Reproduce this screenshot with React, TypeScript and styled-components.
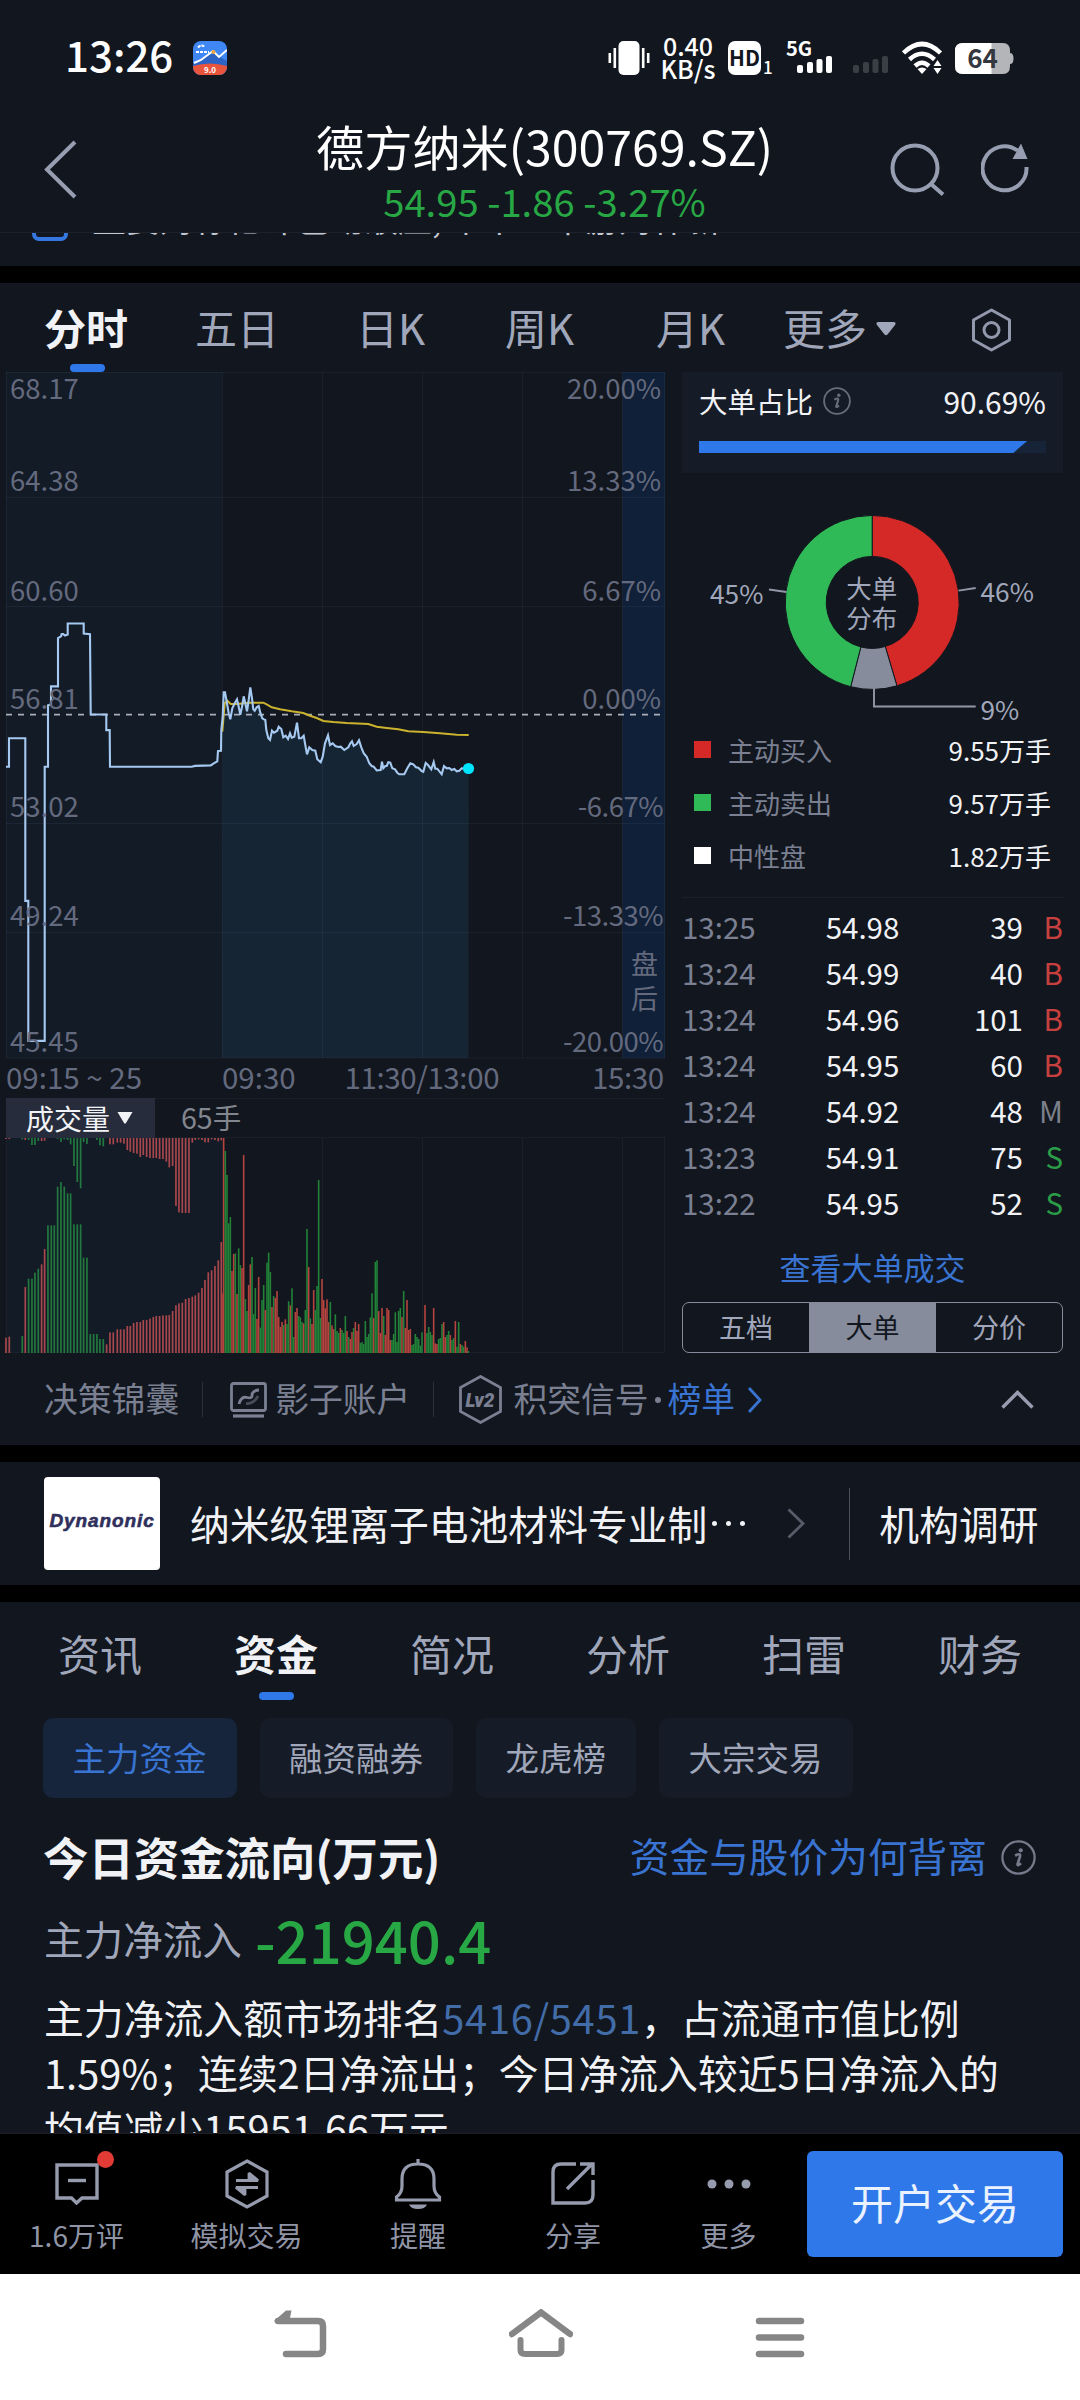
import React from "react";
import styled, { createGlobalStyle, css } from "styled-components";

const C = {
  bg: "#12161e",
  card: "#161c27",
  white: "#f1f2f5",
  soft: "#a1a7ba",
  dim: "#7a8092",
  axis: "#646a7e",
  blue: "#2f78ea",
  link: "#3974d2",
  red: "#d42926",
  green: "#30b957",
  down: "#28a745",
};

const FONT = '"Noto Sans CJK SC", "Noto Sans", sans-serif';

const Global = createGlobalStyle`
  html, body { margin: 0; padding: 0; background: #000; }
  body { width: 1080px; font-family: ${FONT}; color: ${C.white}; }
  * { box-sizing: border-box; }
  svg { display: block; flex: none; }
`;

const Screen = styled.div`
  width: 1080px;
  height: 2400px;
  display: flex;
  flex-direction: column;
  overflow: hidden;
  background: ${C.bg};
`;

const Gap = styled.div<{ $h: number }>`
  height: ${(p) => p.$h}px;
  flex: none;
  background: #000;
`;

const Spacer = styled.div`
  flex: 1;
`;

/* ---------- status bar ---------- */

const StatusBar = styled.div`
  height: 116px;
  flex: none;
  display: flex;
  align-items: center;
  padding: 0 66px 0 65px;
  color: #fff;
`;

const Clock = styled.div`
  font-size: 42px;
  font-weight: 500;
  line-height: 42px;
  margin: -8px 20px 0 0;
`;

const StatusIcons = styled.div`
  display: flex;
  align-items: center;
`;

const Speed = styled.div`
  width: 58px;
  margin: 0 11px 0 9px;
  text-align: center;
  font-size: 25px;
  font-weight: 500;
  line-height: 23px;
  padding-bottom: 3px;
  white-space: nowrap;
`;

const Sig = styled.svg<{ $ml: number }>`
  margin-left: ${(p) => p.$ml}px;
`;

function SignalBars({ color }: { color: string }) {
  return (
    <g fill={color}>
      <rect x="0" y="9" width="6" height="8" rx="2" />
      <rect x="10" y="6" width="6" height="11" rx="2" />
      <rect x="19.5" y="3" width="6" height="14" rx="2" />
      <rect x="29" y="0" width="6" height="17" rx="2" />
    </g>
  );
}

function Status() {
  return (
    <StatusBar>
      <Clock>13:26</Clock>
      <svg width="34" height="34" viewBox="0 0 34 34">
        <defs>
          <clipPath id="appIcon">
            <rect width="34" height="34" rx="8" />
          </clipPath>
        </defs>
        <g clipPath="url(#appIcon)">
          <rect width="34" height="34" fill="#3f87f5" />
          <path d="M0 22L20 12L34 20V34H0Z" fill="#2c63c4" />
          <path d="M0 25Q17 20 34 25V34H0Z" fill="#e9553c" />
          <path d="M1 22L8 19L20 10L26 16L34 9" fill="none" stroke="#fff" strokeWidth="2" />
          <circle cx="20.500" cy="11" r="2" fill="#f2a33c" />
          <path d="M5 6.500Q8 3 12 6M3 11H16" stroke="#fff" strokeWidth="2" strokeDasharray="3 1" fill="none" />
          <text x="11" y="32" fontSize="8" fill="#fff" fontWeight="700" fontFamily={FONT}>9.0</text>
        </g>
      </svg>
      <Spacer />
      <StatusIcons>
        <svg width="42" height="34" viewBox="0 0 42 34">
          <rect x="10.500" y="0" width="21" height="34" rx="5" fill="#fff" />
          <path d="M6.800 7V27M35.200 7V27" stroke="#fff" strokeWidth="2.600" />
          <path d="M1.800 12V22M40.200 12V22" stroke="#fff" strokeWidth="2.600" />
        </svg>
        <Speed>
          0.40
          <br />
          KB/s
        </Speed>
        <svg width="46" height="34" viewBox="0 0 46 34">
          <rect width="33" height="34" rx="7" fill="#fff" />
          <text x="16.500" y="24.500" textAnchor="middle" fontSize="21" fontWeight="700" fill={C.bg} fontFamily={FONT}>HD</text>
          <text x="35" y="33" fontSize="17" fontWeight="500" fill="#fff" fontFamily={FONT}>1</text>
        </svg>
        <Sig $ml={12} width="46" height="34" viewBox="0 0 46 34">
          <text x="0" y="15" fontSize="20" fontWeight="700" fill="#fff" fontFamily={FONT} textLength="26">5G</text>
          <g transform="translate(11 15)"><SignalBars color="#fff" /></g>
        </Sig>
        <Sig $ml={21} width="36" height="34" viewBox="0 0 36 34">
          <g transform="translate(0 15)"><SignalBars color="#3b3e45" /></g>
        </Sig>
        <Sig $ml={13} width="41" height="34" viewBox="0 0 41 34">
          <g fill="none" stroke="#fff" strokeWidth="4.500">
            <path d="M1.500 12Q20 -6 38.500 12" />
            <path d="M7.500 18.500Q20 7 32.500 18.500" />
            <path d="M13 25Q20 18.500 27 25" />
          </g>
          <path d="M15.500 28Q20 25 24.500 28L20 33Z" fill="#fff" />
          <path d="M31.500 25L35.500 19L39.500 25ZM31.500 27L35.500 33L39.500 27Z" fill="#fff" />
        </Sig>
        <Sig $ml={12} width="59" height="31" viewBox="0 0 59 31">
          <path d="M8 0H48Q55 0 55 8V10Q58.500 10 58.500 15.500T55 21V23Q55 31 48 31H8Q0 31 0 23V8Q0 0 8 0Z" fill="#b4b5b8" />
          <path d="M8 0H36.500V31H8Q0 31 0 23V8Q0 0 8 0Z" fill="#fff" />
          <text x="27.500" y="24.500" textAnchor="middle" fontSize="26" fontWeight="700" fill="#34373e" fontFamily={FONT}>64</text>
        </Sig>
      </StatusIcons>
    </StatusBar>
  );
}

/* ---------- title bar ---------- */

const TitleBar = styled.div`
  height: 117px;
  flex: none;
  display: grid;
  grid-template-columns: 228px 1fr 219px;
  border-bottom: 1px solid #1c212b;
`;

const BackCell = styled.div`
  padding: 24px 0 0 43px;
`;

const TitleCell = styled.div`
  text-align: center;
  white-space: nowrap;
`;

const Title = styled.div`
  font-size: 48.200px;
  line-height: 58px;
  color: #fff;
`;

const Quote = styled.div`
  font-size: 38.200px;
  line-height: 53px;
  color: ${C.down};
`;

const TitleActions = styled.div`
  display: flex;
  gap: 34px;
  padding: 26px 0 0 28px;
`;

function Header() {
  return (
    <TitleBar>
      <BackCell>
        <svg width="36" height="60" viewBox="0 0 36 60" fill="none" stroke="#979eb2" strokeWidth="4">
          <path d="M32 2L4 29.500L32 57" />
        </svg>
      </BackCell>
      <TitleCell>
        <Title>德方纳米(300769.SZ)</Title>
        <Quote>54.95 -1.86 -3.27%</Quote>
      </TitleCell>
      <TitleActions>
        <svg width="58" height="56" viewBox="0 0 58 56" fill="none" stroke="#979eb2" strokeWidth="4">
          <circle cx="26" cy="26" r="22.500" />
          <path d="M42 42L54 52.500" />
        </svg>
        <svg width="56" height="56" viewBox="0 0 56 56" fill="none" stroke="#979eb2" strokeWidth="4">
          <path d="M45.500 25A22 22 0 1 1 36.500 8.500" />
          <path d="M40 1.500L46.500 17H31.500Z" fill="#979eb2" stroke="none" />
        </svg>
      </TitleActions>
    </TitleBar>
  );
}

const Clipped = styled.div`
  height: 33px;
  flex: none;
  overflow: hidden;
  display: flex;
  align-items: flex-start;
  padding-left: 32px;
`;

const ClippedBadge = styled.div`
  width: 36px;
  height: 37px;
  margin: -29px 24px 0 0;
  border: 4px solid #3577de;
  border-radius: 7px;
`;

const ClippedText = styled.div`
  margin-top: -32px;
  font-size: 34px;
  line-height: 34px;
  white-space: nowrap;
  color: #c3c7d0;
`;

/* ---------- chart tabs ---------- */

const ChartTabs = styled.div`
  height: 89px;
  flex: none;
  display: grid;
  grid-template-columns: 151px 161px 149px 151px 127px 188px 60px;
  padding-left: 44px;
`;

const ChartTab = styled.div<{ $on?: boolean }>`
  padding-top: 15px;
  font-size: 42px;
  line-height: 57px;
  white-space: nowrap;
  color: ${(p) => (p.$on ? C.white : C.soft)};
  font-weight: ${(p) => (p.$on ? 700 : 400)};
  ${(p) =>
    p.$on &&
    css`
      &::after {
        content: "";
        display: block;
        width: 35px;
        height: 8px;
        margin: 9px 0 0 26px;
        border-radius: 4px;
        background: ${C.blue};
      }
    `}
`;

const MoreTab = styled(ChartTab)`
  display: flex;
  gap: 9px;
  align-items: center;
  align-self: start;
  & > svg {
    margin-top: 5px;
  }
`;

const SettingsCell = styled.div`
  padding-top: 25px;
`;

/* ---------- market area ---------- */

const Market = styled.div`
  display: flex;
  flex: none;
  height: 982px;
`;

const ChartColumn = styled.div`
  width: 682px;
  flex: none;
`;

const VolumeHeader = styled.div`
  width: 659px;
  height: 40px;
  margin-left: 6px;
  display: flex;
  border-top: 1px solid #191e27;
  border-bottom: 1px solid #191e27;
`;

const VolumePicker = styled.div`
  width: 149px;
  margin: -1px 26px -1px 0;
  display: flex;
  align-items: center;
  gap: 7px;
  padding-left: 20px;
  font-size: 28px;
  line-height: 36px;
  background: #262c3b;
`;

const VolumeValue = styled.div`
  font-size: 28.500px;
  line-height: 36px;
  color: #82868e;
`;

const AUCTION = "18,886 27,886 27,824 76,824 76,1178 85,1178 85,1483 134,1483 134,886 144,886 144,752 153,750 153,711 174,711 174,606 183,602 185,597 190,597 195,600 203,598 203,574 251,574 251,596 270,597 272,772 319,772 319,806 329,806 330,886 575,886 585,884 632,883 637,881";
const PRICE = "32,316 45,308 52,304 54,273 63,272 64,210 68,170 71,97 75,97 80,125 86,160 91,178 97,145 104,130 111,118 116,140 121,164 126,140 131,109 136,130 141,154 146,120 151,82 156,115 160,148 164,152 170,142 176,138 181,158 187,175 192,178 196,180 199,210 205,235 210,240 216,212 222,218 232,212 236,200 244,207 250,232 257,227 264,237 270,220 275,233 283,230 291,188 297,235 304,235 311,227 316,255 321,283 328,262 337,270 346,272 352,298 362,307 368,290 375,250 384,226 390,255 398,250 406,258 415,261 422,260 433,270 445,262 451,250 456,244 461,258 470,252 477,241 484,262 491,280 500,290 508,310 515,318 521,320 530,331 542,330 546,305 550,325 556,318 560,318 565,307 571,308 577,325 585,328 592,338 598,343 613,343 622,325 631,310 640,313 648,322 655,323 665,333 670,335 677,309 684,315 694,328 701,306 706,326 712,326 725,343 732,318 740,325 748,324 755,330 763,327 770,334 778,332 785,325 806,326";
const AVERAGE = "67,215 74,130 82,122 92,132 110,132 150,128 190,128 200,133 215,142 240,148 275,154 310,159 330,167 350,174 370,183 400,186 440,189 505,192 530,200 560,204 595,208 625,214 670,216 720,220 770,224 806,225";

type Pt = [number, number];
const parse = (s: string, fx: (x: number) => number, fy: (y: number) => number): Pt[] =>
  s.split(" ").map((p) => {
    const [x, y] = p.split(",").map(Number);
    return [fx(x), fy(y)];
  });
const join = (pts: Pt[]) => pts.map(([x, y]) => `${x.toFixed(1)},${y.toFixed(1)}`).join(" ");

const auctionPts = parse(AUCTION, (x) => x / 3, (y) => 360 + y / 2.178);
const pricePts = parse(PRICE, (x) => 200 + x / 3, (y) => 660 + y / 3);
const averagePts = parse(AVERAGE, (x) => 200 + x / 3, (y) => 660 + y / 3);
const areaPts: Pt[] = [[222, 1058], ...pricePts.filter(([x]) => x >= 222), [468.6, 1058]];

const AXIS: [string, string, number][] = [
  ["68.17", "20.00%", 388.5],
  ["64.38", "13.33%", 481],
  ["60.60", "6.67%", 590.5],
  ["56.81", "0.00%", 699],
  ["53.02", "-6.67%", 807],
  ["49.24", "-13.33%", 916],
  ["45.45", "-20.00%", 1042],
];

function PriceChart() {
  return (
    <svg width="670" height="726" viewBox="0 372 670 726" fontFamily={FONT}>
      <rect x="6" y="372" width="216" height="686" fill="#131b27" />
      <rect x="622.500" y="372" width="42.500" height="686" fill="#102038" />
      <polygon points={join(areaPts)} fill="#162533" />
      <g stroke="#8fb0d0" strokeOpacity="0.070" strokeWidth="1">
        {[372.5, 497.5, 606.5, 823.5, 932.5, 1058].map((y) => (
          <path key={y} d={`M6 ${y}H665`} />
        ))}
        {[6.5, 222.5, 322.5, 422.5, 522.5, 622.5, 664.5].map((x) => (
          <path key={x} d={`M${x} 372V1058`} />
        ))}
      </g>
      <path d="M6 714.700H660" stroke="#a9adb8" strokeWidth="1.800" strokeDasharray="6 6" />
      <polyline points={join(averagePts)} fill="none" stroke="#cbb32f" strokeWidth="2" />
      <polyline points={join([...auctionPts, ...pricePts])} fill="none" stroke="#a5c9f0" strokeWidth="2.100" />
      <circle cx="468.500" cy="768.500" r="5.600" fill="#00e5ff" />
      <g fontSize="27.500" fill={C.axis}>
        {AXIS.map(([l, r, y]) => (
          <React.Fragment key={l}>
            <text x="10" y={y + 10}>{l}</text>
            <text
              x={r[0] === "-" ? 663 : 661}
              y={y + 10}
              textAnchor="end"
              letterSpacing={r[0] === "-" ? "-0.5" : undefined}
            >
              {r}
            </text>
          </React.Fragment>
        ))}
        <text x="631" y="974" fontSize="27">盘</text>
        <text x="631" y="1009" fontSize="27">后</text>
      </g>
      <g fontSize="29.500" fill={C.axis}>
        <text x="6" y="1089">09:15 ~ 25</text>
        <text x="222" y="1089">09:30</text>
        <text x="344.500" y="1089" textLength="155">11:30/13:00</text>
        <text x="664" y="1089" textAnchor="end" textLength="72">15:30</text>
      </g>
    </svg>
  );
}

const AUCTION_UP =
  "18,773,r 28,770,r 67,768,g 76,621,r 86,596,g 96,596,g 105,578,g 115,566,g 125,553,r 134,507,r 144,436,g 154,436,g 163,436,g 173,320,g 183,306,g 193,320,g 203,340,g 212,340,g 222,433,g 232,433,g 242,433,g 251,533,g 261,533,g 271,762,g 281,762,g 291,762,g 300,777,g 310,777,g 320,793,r 330,757,r 340,757,r 352,748,r 362,748,r 372,748,r 382,738,r 391,738,r 401,729,r 411,726,r 421,726,r 430,720,r 440,720,r 450,716,r 460,711,r 469,708,r 479,708,r 489,706,r 499,706,r 508,705,r 518,693,r 528,676,r 537,670,r 547,668,r 557,657,r 567,654,r 577,650,r 586,646,r 596,638,r 606,624,r 615,600,r 625,577,r 635,571,r 645,558,r 655,541,r 664,486,r";
const AUCTION_DOWN =
  "18,177,r 28,177,r 67,178,g 76,180,r 86,180,g 96,195,g 105,195,g 115,183,g 125,183,r 134,182,r 173,177,g 183,186,g 193,178,g 203,180,g 212,193,g 222,258,g 232,306,g 242,325,g 251,186,g 261,192,g 291,180,g 300,196,g 310,199,g 330,193,r 340,193,r 352,188,r 362,188,r 372,191,r 382,210,r 391,215,r 401,219,r 411,221,r 421,231,r 430,225,r 440,231,r 450,234,r 460,234,r 469,234,r 479,237,r 489,237,r 499,245,r 508,262,r 518,258,r 528,378,r 537,397,r 547,399,r 557,399,r 567,399,r 577,188,r 586,180,r 596,178,r 606,180,r 615,187,r 625,187,r 635,178,r 645,180,r 655,184,r 664,181,r";
const TRADE_BARS =
  "66,640,r 71,174,r 76,213,g 81,285,g 86,430,g 91,411,g 96,573,r 101,522,r 106,520,g 111,642,r 116,505,g 121,555,g 126,564,r 131,225,r 136,657,g 141,693,g 146,615,r 151,553,r 156,531,g 161,702,g 166,624,g 171,717,r 176,591,r 181,743,g 186,660,g 191,615,g 196,690,r 201,548,g 206,518,g 211,576,g 216,681,r 221,648,g 226,654,r 231,633,r 236,711,r 241,741,r 246,726,r 251,735,g 256,718,r 261,732,g 266,664,g 271,676,r 276,625,g 281,771,g 286,696,r 291,684,r 296,708,g 301,712,g 306,726,g 311,730,r 316,690,g 321,447,g 326,561,r 331,715,g 336,732,r 341,630,r 346,690,g 351,618,g 356,300,g 361,714,g 366,597,r 371,660,r 376,685,r 381,658,r 386,726,r 391,666,g 396,736,r 401,747,r 406,703,g 411,753,g 416,759,g 421,744,r 426,750,g 431,759,g 436,708,g 441,753,r 446,771,g 451,777,r 456,756,r 461,744,g 466,726,r 471,753,r 476,732,r 481,789,g 486,786,g 491,792,g 496,723,g 501,771,g 506,762,g 511,712,g 516,640,g 521,714,r 526,546,g 531,541,g 536,693,r 541,759,r 546,684,r 551,708,g 556,765,r 561,684,r 566,690,r 571,780,r 576,780,g 581,762,g 586,697,g 591,786,g 596,693,g 601,684,g 606,711,r 611,633,g 616,744,r 621,660,r 626,750,r 631,747,r 636,795,g 641,792,g 646,762,g 651,771,g 656,777,g 661,797,g 666,757,g 675,675,r 681,759,g 686,741,g 691,756,g 696,765,g 701,684,r 706,790,r 711,792,r 716,777,g 721,774,g 726,732,g 731,726,r 736,771,r 741,765,g 746,753,g 751,765,r 756,780,g 761,774,g 766,723,r 771,800,g 776,726,g 781,792,r 786,795,g 791,800,g 796,783,r 801,802,r 805,813,g";

type Bar = { x: number; y: number; up: boolean };
const bars = (s: string, offset: number): Bar[] =>
  s.split(" ").map((b) => {
    const [x, y, c] = b.split(",");
    return { x: offset + Number(x) / 3, y: 1080 + Number(y) / 3, up: c === "r" };
  });

const TOP = 1138;
const BASE = 1353;

function VolumeChart() {
  return (
    <svg width="670" height="216" viewBox="0 1138 670 216">
      <rect x="6" y={TOP} width="216" height="215" fill="#131b27" />
      <g stroke="#1a1f29" strokeWidth="1">
        <path d="M6 1352.500H665M6.500 1138V1353M222.500 1138V1353M322.500 1138V1353M422.500 1138V1353M522.500 1138V1353M622.500 1138V1353M664.500 1138V1353" />
      </g>
      {bars(AUCTION_UP, 0).map((b, i) => (
        <rect key={i} x={b.x - 0.9} y={b.y} width="1.700" height={BASE - b.y} fill={b.up ? "#a8474d" : "#22793f"} />
      ))}
      {bars(AUCTION_DOWN, 0).map((b, i) => (
        <rect key={i} x={b.x - 0.9} y={TOP} width="1.700" height={b.y - TOP} fill={b.up ? "#a8474d" : "#22793f"} />
      ))}
      {bars(TRADE_BARS, 200).map((b, i) => (
        <rect key={i} x={b.x - 0.8} y={b.y} width="1.600" height={BASE - b.y} fill={b.up ? "#b5443f" : "#218238"} />
      ))}
    </svg>
  );
}

/* ---------- big order panel ---------- */

const Panel = styled.div`
  width: 381px;
  flex: none;
  display: flex;
  flex-direction: column;
`;

const RatioCard = styled.div`
  height: 101px;
  padding: 7px 17px 0 17px;
  background: ${C.card};
`;

const RatioRow = styled.div`
  display: flex;
  align-items: center;
  height: 43px;
  font-size: 28.500px;
`;

const RatioValue = styled.div`
  font-size: 30px;
  line-height: 40px;
`;

const InfoWrap = styled.div`
  margin: 1px 0 0 10px;
`;

const RatioTrack = styled.div`
  height: 12px;
  margin-top: 19px;
  background: #172336;
`;

const RatioFill = styled.div`
  height: 12px;
  background: ${C.blue};
  clip-path: polygon(0 0, 100% 0, calc(100% - 14px) 100%, 0 100%);
`;

function InfoIcon({ size, color }: { size: number; color: string }) {
  return (
    <svg width={size} height={size} viewBox="0 0 28 28">
      <circle cx="14" cy="14" r="12.900" fill="none" stroke={color} strokeWidth="1.800" />
      <circle cx="15.800" cy="8.200" r="1.700" fill={color} />
      <path d="M11.300 12.600Q14 11 15 11.600Q15.700 12 14.900 14.200L13.300 19Q13 20.300 14 20Q14.800 19.700 16 18.600" fill="none" stroke={color} strokeWidth="2.100" />
    </svg>
  );
}

const polar = (deg: number, r: number) => {
  const a = (deg * Math.PI) / 180;
  return `${(872.2 + r * Math.sin(a)).toFixed(2)} ${(602.4 - r * Math.cos(a)).toFixed(2)}`;
};
const ring = (a: number, b: number) => {
  const large = b - a > 180 ? 1 : 0;
  return `M${polar(a, 87)}A87 87 0 ${large} 1 ${polar(b, 87)}L${polar(b, 46)}A46 46 0 ${large} 0 ${polar(a, 46)}Z`;
};

function Donut() {
  return (
    <svg width="381" height="250" viewBox="682 473 381 250" fontFamily={FONT}>
      <g stroke={C.bg} strokeWidth="1">
        <path d={ring(0, 163.5)} fill={C.red} />
        <path d={ring(163.5, 194.3)} fill="#868c9b" />
        <path d={ring(194.3, 360)} fill={C.green} />
      </g>
      <path d="M958.500 590.600L975.700 588M786.500 592L769 589.500M874 688.500V706.500H975.700" fill="none" stroke="#9197a8" strokeWidth="1.900" />
      <g fontSize="26.300" fill={C.soft}>
        <text x="710" y="604">45%</text>
        <text x="980.500" y="602">46%</text>
        <text x="980.500" y="720">9%</text>
        <text x="871.800" y="597.500" textAnchor="middle" fontSize="25.500">大单</text>
        <text x="871.800" y="627.500" textAnchor="middle" fontSize="25.500">分布</text>
      </g>
    </svg>
  );
}

const LegendRow = styled.div`
  height: 53px;
  display: flex;
  align-items: center;
  padding: 0 12px;
  font-size: 26px;
  line-height: 30px;
`;

const Swatch = styled.div<{ $c: string }>`
  width: 17px;
  height: 17px;
  margin-right: 17px;
  background: ${(p) => p.$c};
`;

const LegendLabel = styled.div`
  flex: 1;
  color: ${C.dim};
`;

const Divider = styled.div`
  height: 1px;
  margin: 15px 0 5px;
  background: #1b2029;
`;

const TradeRow = styled.div`
  display: grid;
  grid-template-columns: 120px 121px 100px 40px;
  height: 46px;
  font-size: 29.500px;
  line-height: 46px;
  color: ${C.white};
`;

const Time = styled.div`
  color: ${C.dim};
`;

const Price = styled.div`
  text-align: center;
`;

const Qty = styled.div`
  text-align: right;
`;

const Side = styled.div<{ $s: string }>`
  text-align: right;
  color: ${(p) => (p.$s === "B" ? "#c73f3f" : p.$s === "S" ? "#2b9d48" : "#7c808a")};
`;

const DetailLink = styled.div`
  height: 77px;
  padding-top: 7px;
  text-align: center;
  font-size: 31px;
  line-height: 70px;
  color: ${C.link};
`;

const Segments = styled.div`
  display: grid;
  grid-template-columns: 126px 127px 1fr;
  height: 51px;
  border: 1px solid #868c9b;
  border-radius: 7px;
  overflow: hidden;
`;

const Segment = styled.div<{ $on?: boolean }>`
  text-align: center;
  font-size: 27px;
  line-height: 48px;
  color: ${(p) => (p.$on ? "#12161e" : C.soft)};
  background: ${(p) => (p.$on ? "#868c9b" : "transparent")};
`;

const TRADES: [string, string, string, string][] = [
  ["13:25", "54.98", "39", "B"],
  ["13:24", "54.99", "40", "B"],
  ["13:24", "54.96", "101", "B"],
  ["13:24", "54.95", "60", "B"],
  ["13:24", "54.92", "48", "M"],
  ["13:23", "54.91", "75", "S"],
  ["13:22", "54.95", "52", "S"],
];

const LEGEND: [string, string, string][] = [
  [C.red, "主动买入", "9.55万手"],
  [C.green, "主动卖出", "9.57万手"],
  ["#fff", "中性盘", "1.82万手"],
];

function OrderPanel() {
  return (
    <Panel>
      <RatioCard>
        <RatioRow>
          大单占比
          <InfoWrap><InfoIcon size={28} color="#676d7b" /></InfoWrap>
          <Spacer />
          <RatioValue>90.69%</RatioValue>
        </RatioRow>
        <RatioTrack>
          <RatioFill style={{ width: `${(90.69 + 3.9).toFixed(2)}%` }} />
        </RatioTrack>
      </RatioCard>
      <Donut />
      {LEGEND.map(([c, label, value]) => (
        <LegendRow key={label}>
          <Swatch $c={c} />
          <LegendLabel>{label}</LegendLabel>
          {value}
        </LegendRow>
      ))}
      <Divider />
      {TRADES.map(([t, p, q, s], i) => (
        <TradeRow key={i}>
          <Time>{t}</Time>
          <Price>{p}</Price>
          <Qty>{q}</Qty>
          <Side $s={s}>{s}</Side>
        </TradeRow>
      ))}
      <DetailLink>查看大单成交</DetailLink>
      <Segments>
        <Segment>五档</Segment>
        <Segment $on>大单</Segment>
        <Segment>分价</Segment>
      </Segments>
    </Panel>
  );
}

/* ---------- tool strip ---------- */

const ToolStrip = styled.div`
  height: 91px;
  flex: none;
  display: flex;
  align-items: center;
  padding: 0 46px 0 44px;
  font-size: 33.800px;
  line-height: 40px;
  color: ${C.dim};
`;

const ToolText = styled.div<{ $ml?: number; $link?: boolean }>`
  margin: -4px 0 0 ${(p) => p.$ml ?? 0}px;
  color: ${(p) => (p.$link ? C.link : "inherit")};
`;

const ToolSep = styled.div<{ $r: number }>`
  width: 1px;
  height: 35px;
  margin: 0 ${(p) => p.$r}px 0 23px;
  background: #2b303b;
`;

const Dot = styled.div`
  width: 6px;
  height: 6px;
  margin: 0 7px 0 6px;
  border-radius: 3px;
  background: ${C.dim};
`;

function Tools() {
  return (
    <ToolStrip>
      <ToolText>决策锦囊</ToolText>
      <ToolSep $r={27} />
      <svg width="37" height="36" viewBox="0 0 37 36" fill="none" stroke={C.dim} strokeWidth="2.800">
        <rect x="1.500" y="1.500" width="34" height="27" rx="2" />
        <path d="M3 34H34" strokeWidth="3.200" />
        <path d="M9 22Q11 14 17 15.500T22 12Q24 8 29 8" />
        <path d="M16 21.500Q24 22 28 14" strokeOpacity="0.500" />
      </svg>
      <ToolText $ml={8}>影子账户</ToolText>
      <ToolSep $r={25} />
      <svg width="43" height="49" viewBox="0 0 43 49">
        <path d="M21.500 1.500L41.500 12.500V36.500L21.500 47.500L1.500 36.500V12.500Z" fill="none" stroke={C.dim} strokeWidth="2.800" />
        <text x="21" y="31.500" textAnchor="middle" fontSize="20" fontWeight="900" fontStyle="italic" fill={C.dim} fontFamily="Roboto, sans-serif" textLength="29" lengthAdjust="spacingAndGlyphs">Lv2</text>
      </svg>
      <ToolText $ml={11}>积突信号</ToolText>
      <Dot />
      <ToolText $link>榜单</ToolText>
      <Sig $ml={12} width="16" height="26" viewBox="0 0 16 26" fill="none" stroke={C.link} strokeWidth="2.800">
        <path d="M2 1L13 13L2 25" />
      </Sig>
      <Spacer />
      <svg width="33" height="20" viewBox="0 0 33 20" fill="none" stroke="#979daf" strokeWidth="3.400">
        <path d="M1.500 17.500L16.500 2.500L31.500 17.500" />
      </svg>
    </ToolStrip>
  );
}

/* ---------- company strip ---------- */

const Company = styled.div`
  height: 123px;
  flex: none;
  display: flex;
  align-items: center;
  padding: 0 0 0 44px;
  font-size: 39.800px;
  line-height: 48px;
  white-space: nowrap;
`;

const CompanyLogo = styled.div`
  width: 116px;
  height: 93px;
  border-radius: 4px;
  background: #fff;
  display: flex;
  align-items: center;
  justify-content: center;
  color: #2f2f5c;
  font: italic 700 19px/24px "Liberation Sans", sans-serif;
  letter-spacing: 0.900px;
  -webkit-text-stroke: 0.600px #2f2f5c;
  padding-bottom: 6px;
`;

const CompanyText = styled.div<{ $ml: number }>`
  margin: -2px 0 0 ${(p) => p.$ml}px;
`;

const Ellipsis = styled.div`
  display: flex;
  gap: 9px;
  margin: 0 42px 0 5px;
  & > i {
    width: 5px;
    height: 5px;
    border-radius: 3px;
    background: ${C.white};
  }
`;

const CompanySep = styled.div`
  width: 1px;
  height: 72px;
  margin-left: 43px;
  background: #4a4f5b;
`;

function CompanyRow() {
  return (
    <Company>
      <CompanyLogo>Dynanonic</CompanyLogo>
      <CompanyText $ml={30}>纳米级锂离子电池材料专业制</CompanyText>
      <Ellipsis><i /><i /><i /></Ellipsis>
      <svg width="19" height="31" viewBox="0 0 19 31" fill="none" stroke="#565c6a" strokeWidth="2.800">
        <path d="M1.500 1.500L16 15.500L1.500 29.500" />
      </svg>
      <CompanySep />
      <CompanyText $ml={29}>机构调研</CompanyText>
    </Company>
  );
}

/* ---------- funds section ---------- */

const Funds = styled.div`
  flex: none;
  height: 531px;
  overflow: hidden;
`;

const SectionTabs = styled.div`
  display: grid;
  grid-template-columns: repeat(6, 176px);
  padding-left: 12px;
  height: 116px;
`;

const SectionTab = styled.div<{ $on?: boolean }>`
  padding-top: 22px;
  text-align: center;
  font-size: 42px;
  line-height: 58px;
  color: ${(p) => (p.$on ? C.white : C.soft)};
  font-weight: ${(p) => (p.$on ? 700 : 400)};
  ${(p) =>
    p.$on &&
    css`
      &::after {
        content: "";
        display: block;
        width: 35px;
        height: 8px;
        margin: 10px auto 0;
        border-radius: 4px;
        background: ${C.blue};
      }
    `}
`;

const Chips = styled.div`
  display: flex;
  gap: 23px;
  padding-left: 43px;
`;

const Chip = styled.div<{ $on?: boolean }>`
  height: 80px;
  padding: 0 30px 0 29.500px;
  border-radius: 10px;
  font-size: 33.500px;
  line-height: 77px;
  color: ${(p) => (p.$on ? C.link : C.soft)};
  background: ${(p) => (p.$on ? "#16243c" : C.card)};
`;

const FlowHead = styled.div`
  display: flex;
  align-items: center;
  height: 64px;
  margin-top: 26px;
  padding: 0 44px 0 43px;
`;

const FlowTitle = styled.div`
  flex: 1;
  font-size: 45.400px;
  font-weight: 700;
  line-height: 56px;
`;

const FlowLink = styled.div`
  margin: -2px 14px 0 0;
  font-size: 39.700px;
  line-height: 56px;
  color: ${C.link};
`;

const FlowInfo = styled.div`
  margin-top: 2px;
`;

const NetRow = styled.div`
  display: flex;
  height: 88px;
  padding: 14px 0 0 44px;
  color: ${C.soft};
`;

const NetLabel = styled.div`
  font-size: 39.600px;
  line-height: 72px;
`;

const NetValue = styled.div`
  margin-left: 13px;
  font-size: 58px;
  font-weight: 500;
  line-height: 74px;
  color: ${C.down};
`;

const Summary = styled.p`
  margin: 13px 0 0;
  padding-left: 44px;
  font-size: 39.850px;
  line-height: 55.300px;
  white-space: nowrap;
`;

const Rank = styled.span`
  color: #426ca8;
  letter-spacing: 0.700px;
`;

function FundsSection() {
  return (
    <Funds>
      <SectionTabs>
        {["资讯", "资金", "简况", "分析", "扫雷", "财务"].map((t) => (
          <SectionTab key={t} $on={t === "资金"}>{t}</SectionTab>
        ))}
      </SectionTabs>
      <Chips>
        {["主力资金", "融资融券", "龙虎榜", "大宗交易"].map((t, i) => (
          <Chip key={t} $on={i === 0}>{t}</Chip>
        ))}
      </Chips>
      <FlowHead>
        <FlowTitle>今日资金流向(万元)</FlowTitle>
        <FlowLink>资金与股价为何背离</FlowLink>
        <FlowInfo><InfoIcon size={35} color="#757b8b" /></FlowInfo>
      </FlowHead>
      <NetRow>
        <NetLabel>主力净流入</NetLabel>
        <NetValue>-21940.4</NetValue>
      </NetRow>
      <Summary>
        主力净流入额市场排名<Rank>5416/5451</Rank>，占流通市值比例
        <br />
        1.59%；连续2日净流出；今日净流入较近5日净流入的
        <br />
        均值减少15951.66万元
      </Summary>
    </Funds>
  );
}

/* ---------- bottom bar ---------- */

const BottomBar = styled.div`
  height: 141px;
  flex: none;
  display: grid;
  grid-template-columns: 153px 187px 156px 154px 157px 256px;
  border-top: 1px solid #1d1f24;
  background: #000;
`;

const BottomItem = styled.div`
  display: flex;
  flex-direction: column;
  align-items: center;
  padding-top: 17px;
  font-size: 28px;
  line-height: 38px;
  color: #8f95a6;
`;

const IconSlot = styled.div`
  position: relative;
  height: 65px;
  display: flex;
  align-items: center;
`;

const Badge = styled.div`
  position: absolute;
  right: -15px;
  top: 0;
  width: 17px;
  height: 17px;
  border-radius: 50%;
  background: #e23b36;
`;

const OpenAccount = styled.button`
  height: 106px;
  margin: 17px 0 0;
  padding: 0 0 4px;
  border: 0;
  border-radius: 6px;
  background: ${C.blue};
  color: #eaf2ff;
  font: 400 42px/56px ${FONT};
`;

const IC = "#969cae";

function Bottom() {
  return (
    <BottomBar>
      <BottomItem>
        <IconSlot>
          <svg width="44" height="42" viewBox="0 0 44 42" fill="none" stroke={IC} strokeWidth="3.400">
            <path d="M2 2H42V35H27L21.500 40L16.500 35H2Z" />
            <path d="M13 17.500H31" />
          </svg>
          <Badge />
        </IconSlot>
        1.6万评
      </BottomItem>
      <BottomItem>
        <IconSlot>
          <svg width="44" height="50" viewBox="0 0 44 50" fill="none" stroke={IC} strokeWidth="3.200">
            <path d="M22 2L42 13V37L22 48L2 37V13Z" />
            <path d="M11 21.500H33L24 14V21.500M33 28.500H11L20 36V28.500" strokeWidth="2.800" fill={IC} strokeLinejoin="bevel" />
          </svg>
        </IconSlot>
        模拟交易
      </BottomItem>
      <BottomItem>
        <IconSlot>
          <svg width="48" height="50" viewBox="0 0 48 50" fill="none" stroke={IC} strokeWidth="3.200">
            <path d="M24 0V5M8 27V20Q8 5 24 5T40 20V27Q40 34 45.500 38V41H2.500V38Q8 34 8 27Z" />
            <path d="M15 45.500H33Q31 50 24 50T15 45.500Z" fill={IC} stroke="none" />
          </svg>
        </IconSlot>
        提醒
      </BottomItem>
      <BottomItem>
        <IconSlot>
          <svg width="44" height="43" viewBox="0 0 44 43" fill="none" stroke={IC} strokeWidth="3.400">
            <path d="M25 2H10Q2 2 2 10V41H34Q42 41 42 33V18" />
            <path d="M16 27L41 2M29 2H42V13" />
          </svg>
        </IconSlot>
        分享
      </BottomItem>
      <BottomItem>
        <IconSlot>
          <svg width="44" height="10" viewBox="0 0 44 10" fill={IC}>
            <circle cx="5" cy="5" r="4.500" />
            <circle cx="22" cy="5" r="4.500" />
            <circle cx="39" cy="5" r="4.500" />
          </svg>
        </IconSlot>
        更多
      </BottomItem>
      <OpenAccount>开户交易</OpenAccount>
    </BottomBar>
  );
}

const NavBar = styled.div`
  height: 126px;
  flex: none;
  display: flex;
  justify-content: center;
  align-items: flex-start;
  gap: 182px;
  padding: 35px 2px 0 0;
  background: #fff;
`;

function Nav() {
  return (
    <NavBar>
      <svg width="54" height="50" viewBox="0 0 54 50" fill="none" stroke="#868686" strokeWidth="6.500" strokeLinecap="round" strokeLinejoin="round">
        <path d="M5 12H45Q50 12 50 17V40Q50 45 45 45H13" />
        <path d="M1 12L13 1.500H18.500L16 14H4Z" fill="#868686" stroke="none" />
      </svg>
      <svg width="64" height="50" viewBox="0 0 64 50" fill="none" stroke="#868686" strokeWidth="6" strokeLinecap="round">
        <path d="M3 25L32 3.500L61 25" strokeWidth="6.500" />
        <path d="M11.500 31V41Q11.500 45 16 45H48Q52.500 45 52.500 41V31" />
      </svg>
      <svg width="50" height="50" viewBox="0 0 50 50" stroke="#868686" strokeWidth="6.500" strokeLinecap="round">
        <path d="M4 12H46M4 28.500H46M4 45H46" />
      </svg>
    </NavBar>
  );
}

export default function App() {
  return (
    <Screen>
      <Global />
      <Status />
      <Header />
      <Clipped>
        <ClippedBadge />
        <ClippedText>主要对标亿纬己动液压, 中下一千游对作新</ClippedText>
      </Clipped>
      <Gap $h={17} />
      <ChartTabs>
        <ChartTab $on>分时</ChartTab>
        <ChartTab>五日</ChartTab>
        <ChartTab>日K</ChartTab>
        <ChartTab>周K</ChartTab>
        <ChartTab>月K</ChartTab>
        <MoreTab>
          更多
          <svg width="20" height="14" viewBox="0 0 20 14"><path d="M2 0H18Q20.500 0.500 19 3L11.500 12.500Q10 14 8.500 12.500L1 3Q-0.500 0.500 2 0Z" fill={C.soft} /></svg>
        </MoreTab>
        <SettingsCell>
          <svg width="42" height="44" viewBox="0 0 42 44" fill="none" stroke="#9299ac" strokeWidth="3">
            <path d="M20.500 2L38.500 12V32L20.500 42L2.500 32V12Z" strokeLinejoin="round" />
            <circle cx="20.500" cy="22" r="7.500" />
          </svg>
        </SettingsCell>
      </ChartTabs>
      <Market>
        <ChartColumn>
          <PriceChart />
          <VolumeHeader>
            <VolumePicker>
              成交量
              <svg width="16" height="12" viewBox="0 0 16 12"><path d="M0.500 0H15.500L9 11Q8 12 7 11Z" fill={C.white} /></svg>
            </VolumePicker>
            <VolumeValue>65手</VolumeValue>
          </VolumeHeader>
          <VolumeChart />
        </ChartColumn>
        <OrderPanel />
      </Market>
      <Tools />
      <Gap $h={17} />
      <CompanyRow />
      <Gap $h={17} />
      <FundsSection />
      <Bottom />
      <Nav />
    </Screen>
  );
}
